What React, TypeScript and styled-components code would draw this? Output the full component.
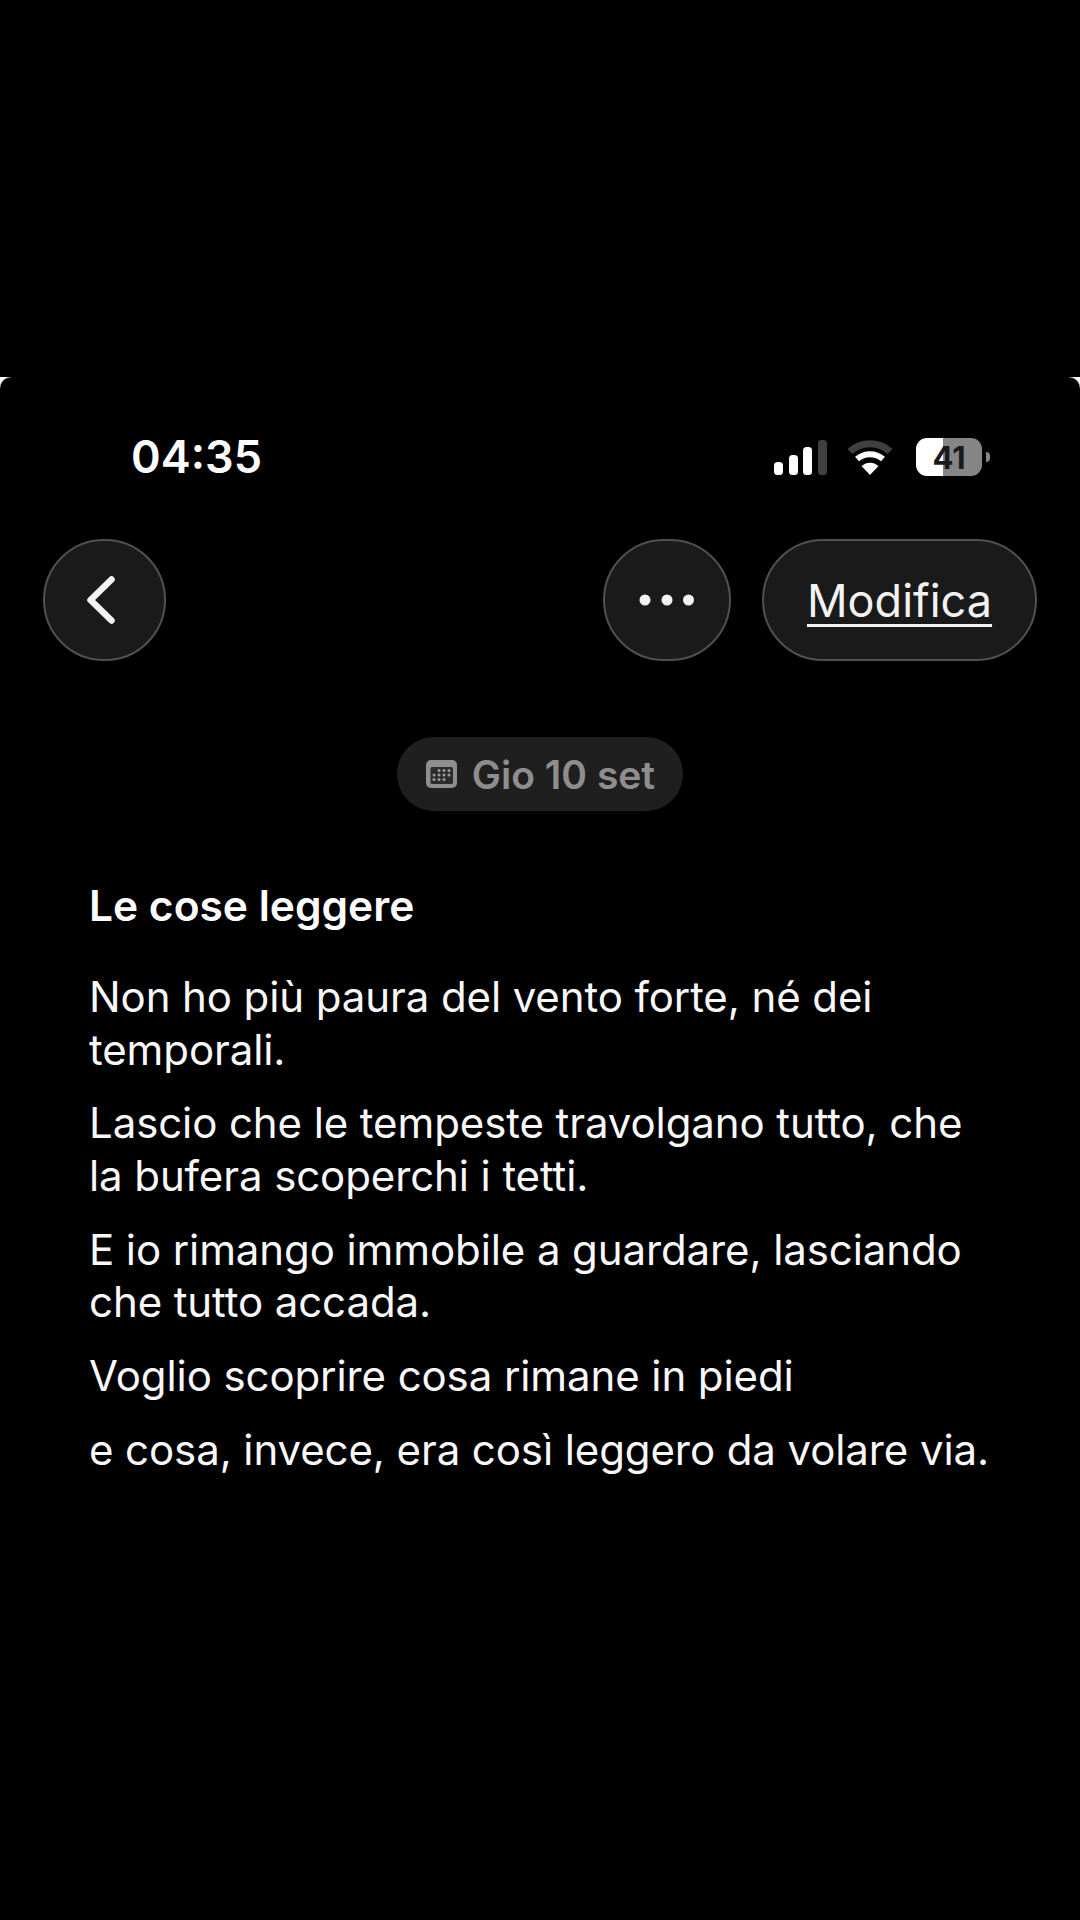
import React from 'react';
import styled, { createGlobalStyle } from 'styled-components';

const GlobalStyle = createGlobalStyle`
  html, body {
    margin: 0;
    background: #000;
  }
`;

const Page = styled.div`
  width: 1080px;
  height: 1920px;
  padding-top: 377px;
  box-sizing: border-box;
  overflow: hidden;
  background: #000;
  font-family: Inter, "Liberation Sans", sans-serif;
  color: #fff;
`;

const Screen = styled.div`
  position: relative;
  height: 1543px;
`;

const Corner = styled.span<{ side: 'left' | 'right' }>`
  position: absolute;
  top: 0;
  ${(p) => p.side}: 0;
  width: 11px;
  height: 11px;
  background: radial-gradient(
    circle at ${(p) => (p.side === 'left' ? '100% 100%' : '0 100%')},
    #000 10px,
    #fff 11.5px
  );
`;

const StatusBar = styled.div`
  display: flex;
  align-items: center;
  justify-content: space-between;
  height: 50px;
  padding: 55px 98px 0 131px;
`;

const Time = styled.span`
  font-size: 45px;
  font-weight: 600;
  line-height: 50px;
`;

const StatusIcons = styled.div`
  display: flex;
  align-items: center;
  gap: 21px;
`;

const Battery = styled.div`
  position: relative;
  display: flex;
  align-items: center;
  justify-content: center;
  width: 66px;
  height: 38px;
  margin-left: 3px;
  border-radius: 11px;
  background: linear-gradient(90deg, #fff 0 41%, #858585 41% 100%);
  color: #1a1a1a;
  font-size: 31px;
  font-weight: 700;

  &::after {
    content: '';
    position: absolute;
    right: -8px;
    top: 14px;
    width: 4px;
    height: 10px;
    border-radius: 0 6px 6px 0;
    background: #858585;
  }
`;

const Toolbar = styled.div`
  display: flex;
  align-items: center;
  gap: 31px;
  margin-top: 57px;
  padding: 0 43px;
`;

const RoundButton = styled.button<{ wide?: boolean }>`
  display: flex;
  align-items: center;
  justify-content: center;
  width: ${(p) => (p.wide ? '128px' : '123px')};
  height: 122px;
  padding: 0;
  border: 2px solid #505050;
  border-radius: 61px;
  background: #1a1a1a;
`;

const Spacer = styled.div`
  flex: 1;
`;

const EditButton = styled.button`
  width: 275px;
  height: 122px;
  padding: 0;
  border: 2px solid #505050;
  border-radius: 61px;
  background: #1a1a1a;
  color: #f2f2f2;
  font-family: inherit;
  font-size: 45px;
  font-weight: 400;
  text-decoration: underline;
  text-decoration-thickness: 3px;
  text-underline-offset: 7px;
`;

const BackGlyph = styled.svg`
  margin-right: 7px;
`;

const DateRow = styled.div`
  display: flex;
  justify-content: center;
  margin-top: 76px;
`;

const DatePill = styled.div`
  display: flex;
  align-items: center;
  gap: 15px;
  height: 74px;
  padding: 0 28px 0 29px;
  border-radius: 37px;
  background: #1f1f1f;
  color: #8e8e8e;
  font-size: 39px;
  font-weight: 600;
`;

const Note = styled.article`
  padding: 0 80px 0 89px;
  margin-top: 69px;
`;

const Title = styled.h1`
  margin: 0 0 39px;
  font-size: 42.5px;
  font-weight: 600;
  line-height: 52px;
`;

const Paragraph = styled.p`
  margin: 0 0 21.4px;
  font-size: 42px;
  font-weight: 400;
  line-height: 52.5px;
  letter-spacing: -0.1px;
  color: #f8f8f8;
`;

const SignalIcon = () => (
  <svg width="53" height="35" viewBox="0 0 53 35">
    <rect x="0" y="22" width="9" height="13" rx="3.5" fill="#fff" />
    <rect x="15" y="15" width="9" height="20" rx="3.5" fill="#fff" />
    <rect x="29" y="7" width="9" height="28" rx="3.5" fill="#fff" />
    <rect x="44" y="0" width="9" height="35" rx="3.5" fill="#404040" />
  </svg>
);

const WifiIcon = () => (
  <svg width="44" height="35" viewBox="0 0 44 35">
    <path d="M2 11.5C13 1 31 1 42 11.5" fill="none" stroke="#404040" strokeWidth="7" />
    <path d="M9 19C16.500 12.500 27.500 12.500 35 19" fill="none" stroke="#fff" strokeWidth="6" />
    <path d="M13.500 26C18.500 21.500 25.500 21.500 30.500 26L22 35Z" fill="#fff" />
  </svg>
);

const BackIcon = () => (
  <BackGlyph width="28" height="48" viewBox="0 0 28 48">
    <path
      d="M24.500 3.500L3.500 24L24.500 44.500"
      fill="none"
      stroke="#f2f2f2"
      strokeWidth="6.500"
      strokeLinecap="round"
      strokeLinejoin="round"
    />
  </BackGlyph>
);

const MoreIcon = () => (
  <svg width="56" height="14" viewBox="0 0 56 14">
    <circle cx="6" cy="7" r="5.500" fill="#f2f2f2" />
    <circle cx="28" cy="7" r="5.500" fill="#f2f2f2" />
    <circle cx="49.500" cy="7" r="5.500" fill="#f2f2f2" />
  </svg>
);

const calendarDots = [
  { y: 10.5, cols: [13, 18, 23] },
  { y: 15, cols: [8, 13, 18, 23] },
  { y: 19.5, cols: [8, 13, 18] },
];

const CalendarIcon = () => (
  <svg width="31" height="28" viewBox="0 0 31 28">
    <rect width="31" height="28" rx="5" fill="#8e8e8e" />
    <rect x="4.500" y="7" width="22.500" height="17" rx="1.500" fill="#2c2c2c" />
    {calendarDots.map((row) =>
      row.cols.map((x) => (
        <circle key={`${row.y}-${x}`} cx={x} cy={row.y} r="1.500" fill="#9a9a9a" />
      )),
    )}
  </svg>
);

export default function App() {
  return (
    <Page>
      <GlobalStyle />
      <Screen>
        <Corner side="left" />
        <Corner side="right" />

        <StatusBar>
          <Time>04:35</Time>
          <StatusIcons>
            <SignalIcon />
            <WifiIcon />
            <Battery>41</Battery>
          </StatusIcons>
        </StatusBar>

        <Toolbar>
          <RoundButton aria-label="Indietro">
            <BackIcon />
          </RoundButton>
          <Spacer />
          <RoundButton wide aria-label="Altro">
            <MoreIcon />
          </RoundButton>
          <EditButton>Modifica</EditButton>
        </Toolbar>

        <DateRow>
          <DatePill>
            <CalendarIcon />
            Gio 10 set
          </DatePill>
        </DateRow>

        <Note>
          <Title>Le cose leggere</Title>
          <Paragraph>Non ho più paura del vento forte, né dei temporali.</Paragraph>
          <Paragraph>Lascio che le tempeste travolgano tutto, che la bufera scoperchi i tetti.</Paragraph>
          <Paragraph>E io rimango immobile a guardare, lasciando che tutto accada.</Paragraph>
          <Paragraph>Voglio scoprire cosa rimane in piedi</Paragraph>
          <Paragraph>e cosa, invece, era così leggero da volare via.</Paragraph>
        </Note>
      </Screen>
    </Page>
  );
}
